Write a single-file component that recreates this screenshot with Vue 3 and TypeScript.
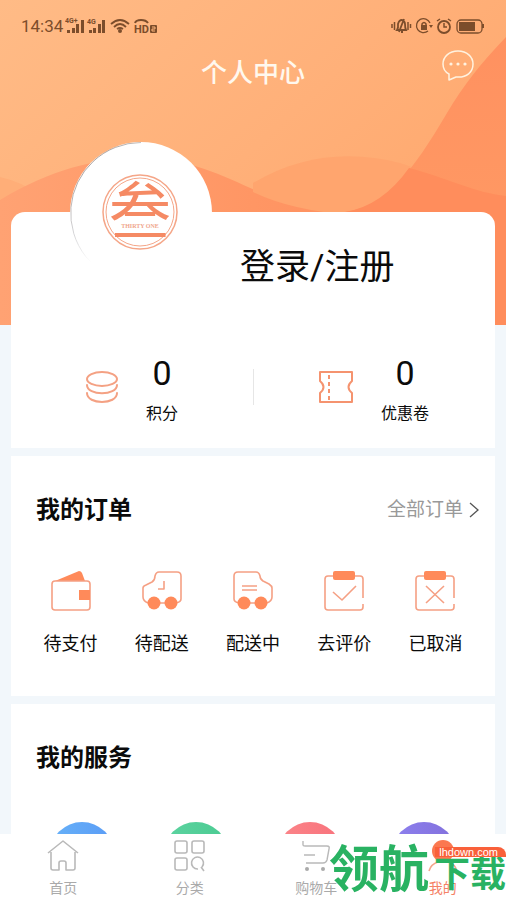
<script setup lang="ts">
interface OrderEntry {
  id: string
  label: string
}

interface ServiceEntry {
  id: string
  tone: string
}

interface TabEntry {
  id: string
  label: string
  active: boolean
}

const orders: OrderEntry[] = [
  { id: 'pay', label: '待支付' },
  { id: 'ship', label: '待配送' },
  { id: 'transit', label: '配送中' },
  { id: 'review', label: '去评价' },
  { id: 'cancel', label: '已取消' },
]

const services: ServiceEntry[] = [
  { id: 's1', tone: 'blue' },
  { id: 's2', tone: 'green' },
  { id: 's3', tone: 'red' },
  { id: 's4', tone: 'violet' },
]

const tabs: TabEntry[] = [
  { id: 'home', label: '首页', active: false },
  { id: 'category', label: '分类', active: false },
  { id: 'cart', label: '购物车', active: false },
  { id: 'mine', label: '我的', active: true },
]
</script>

<template>
  <div class="app">
    <main class="scroll">
      <svg class="waves" viewBox="0 0 506 325" preserveAspectRatio="none" aria-hidden="true">
        <defs>
          <linearGradient id="sky" x1="0" y1="0" x2="1" y2="0.7">
            <stop offset="0" stop-color="#ffbb86" />
            <stop offset="0.55" stop-color="#ffb079" />
            <stop offset="1" stop-color="#ffa76c" />
          </linearGradient>
          <linearGradient id="low" x1="0" y1="0" x2="1" y2="0">
            <stop offset="0" stop-color="#ffa273" />
            <stop offset="0.5" stop-color="#ff9664" />
            <stop offset="1" stop-color="#ff8a5a" />
          </linearGradient>
          <linearGradient id="side" x1="0" y1="0" x2="0" y2="1">
            <stop offset="0" stop-color="#ff9160" />
            <stop offset="1" stop-color="#ff9863" />
          </linearGradient>
        </defs>
        <rect width="506" height="325" fill="url(#sky)" />
        <path d="M0 177Q22 182 40 195V325H0Z" fill="#ffae78" />
        <path d="M0 200C50 170 95 158 140 158C205 158 245 190 290 204Q320 212 350 212L506 212V325H0Z" fill="url(#low)" />
        <path d="M253 183C300 155 350 150 400 163L450 180L400 215H350Q290 210 253 192Z" fill="#ffa56e" />
        <path d="M506 37C480 64 463 86 447 113C430 142 415 165 395 187C382 200 368 208 345 212H506Z" fill="url(#side)" />
        <path d="M409 168C445 177 475 193 506 196V325H300V212H345Q382 206 409 168Z" fill="#ff8d5c" />
      </svg>

      <div class="page">
        <header class="top">
          <div class="status">
            <span class="clock">14:34</span>
            <svg class="signals" width="96" height="18" viewBox="0 0 96 18" aria-hidden="true">
              <g fill="currentColor">
                <text x="0" y="6" font-size="7" font-weight="700">4G+</text>
                <rect x="2" y="13" width="3" height="3" /><rect x="7" y="11" width="3" height="5" /><rect x="11" y="7" width="3" height="9" /><rect x="16" y="3" width="3" height="13" />
                <text x="22" y="7" font-size="7" font-weight="700">4G</text>
                <rect x="24" y="13" width="3" height="3" /><rect x="28" y="11" width="3" height="5" /><rect x="33" y="7" width="3" height="9" /><rect x="37" y="3" width="3" height="13" />
                <circle cx="55" cy="14" r="2" />
                <text x="69" y="16" font-size="11" font-weight="700">HD</text>
                <rect x="85" y="8" width="7" height="8" rx="1" />
              </g>
              <g fill="none" stroke="currentColor" stroke-width="2">
                <path d="M46 7Q55 -1 64 7M49 10Q55 4 61 10M52 12Q55 10 58 12" stroke-width="1.8" />
                <path d="M70 6Q71 3 76 3Q81 3 83 6" />
                <path d="M87 10H90V12H87V14H90" stroke="#ffb67d" stroke-width="1" />
              </g>
            </svg>
            <svg class="device" width="94" height="18" viewBox="0 0 94 18" aria-hidden="true">
              <g fill="none" stroke="currentColor" stroke-width="1.5">
                <path d="M1 7V11M3.500 5V13M17 5V13M19.500 7V11" />
                <path d="M6 13Q7.500 11 7 7Q8 3 11 3Q14 4 14 7Q14 11 15 13ZM8 15L13 2M10 15H12" stroke-width="1.800" />
                <path d="M39 6A7 7 0 1 0 37 14" stroke-width="1.300" />
                <path d="M31 9V7Q33 4 35 7V9" />
                <circle cx="53" cy="10" r="6" stroke-width="1.800" />
                <path d="M53 6V10H56M46 4L49 2M60 4L57 2" />
                <rect x="66" y="3" width="25" height="13" rx="4" stroke-width="1.300" />
              </g>
              <g fill="currentColor">
                <rect x="30" y="8" width="6" height="5" />
                <path d="M38 8H42L40 11Z" />
                <rect x="68" y="5" width="16" height="9" />
                <rect x="91" y="7" width="2" height="4" />
              </g>
            </svg>
          </div>
          <div class="titlebar">
            <h1>个人中心</h1>
            <button class="chat" type="button" aria-label="消息">
              <svg width="34" height="32" viewBox="0 0 34 32">
                <path d="M17 1C8 1 2 7 2 14C2 18 4 22 8 24L8 30L15 27C26 28 32 22 32 14C32 7 26 1 17 1Z" fill="none" stroke="#fff2df" stroke-width="1.500" stroke-linejoin="round" />
                <g fill="#fff2df"><circle cx="10" cy="14" r="1.600" /><circle cx="17" cy="14" r="1.600" /><circle cx="24" cy="14" r="1.600" /></g>
              </svg>
            </button>
          </div>
        </header>

        <section class="card profile">
          <div class="identity">
            <svg class="avatar" viewBox="0 0 142 142" role="img" aria-label="头像">
              <defs>
                <linearGradient id="rim" x1="0.1" y1="0.1" x2="0.5" y2="0.9">
                  <stop offset="0" stop-color="#5c4a42" />
                  <stop offset="0.5" stop-color="#b4b4b8" />
                  <stop offset="0.85" stop-color="#ffffff" />
                </linearGradient>
              </defs>
              <circle cx="71" cy="71" r="71" fill="#fff" />
              <path d="M71 0.500A70.500 70.500 0 0 0 60 140.600" fill="none" stroke="url(#rim)" stroke-width="0.600" />
              <circle cx="70" cy="70" r="37" fill="none" stroke="#f5a688" stroke-width="1.500" />
              <circle cx="70" cy="70" r="34" fill="none" stroke="#f5a688" stroke-width="1" />
              <text class="mark" x="70" y="92" text-anchor="middle">叁</text>
              <rect x="48" y="79" width="44" height="9" fill="#fff" />
              <text class="motto" x="70" y="86" text-anchor="middle">THIRTY ONE</text>
            </svg>
            <a class="login" href="#login">登录/注册</a>
          </div>
          <div class="stats">
            <a class="stat" href="#points">
              <svg width="32" height="32" viewBox="0 0 32 32" fill="none" stroke="#f4a183" stroke-width="2" aria-hidden="true">
                <ellipse cx="16" cy="8" rx="15" ry="7" />
                <path d="M1 14C1 25 31 25 31 14M1 22C1 34 31 34 31 22" stroke-linecap="round" />
              </svg>
              <span class="figure"><b>0</b><span>积分</span></span>
            </a>
            <a class="stat" href="#coupons">
              <svg width="34" height="32" viewBox="0 0 34 32" fill="none" stroke="#f5936f" stroke-width="2" stroke-linejoin="round" aria-hidden="true">
                <path d="M1 1H33V10Q26 16 33 22V31H1V22Q8 16 1 10Z" />
                <path d="M10 4V30" stroke-dasharray="4 3" />
              </svg>
              <span class="figure"><b>0</b><span>优惠卷</span></span>
            </a>
          </div>
        </section>

        <section class="card">
          <div class="heading">
            <h2>我的订单</h2>
            <a class="more" href="#orders">全部订单
              <svg width="10" height="18" viewBox="0 0 10 18" aria-hidden="true"><path d="M1 2L9 9L1 16" fill="none" stroke="#555" stroke-width="1.300" /></svg>
            </a>
          </div>
          <nav class="orders" aria-label="我的订单">
            <a v-for="item in orders" :key="item.id" class="order" :href="'#' + item.id">
              <svg width="40" height="40" viewBox="0 0 40 40" fill="none" stroke="#f5a084" stroke-width="1.600" stroke-linejoin="round" aria-hidden="true">
                <template v-if="item.id === 'pay'">
                  <path d="M4 10L28 0Q30 0 31 2L34 10Z" fill="#ff8a5a" stroke="none" />
                  <rect x="1" y="10" width="38" height="29" rx="3" />
                  <rect x="28" y="19" width="11" height="10" fill="#ff8a5a" stroke="none" />
                </template>
                <template v-else-if="item.id === 'ship'">
                  <path d="M6 32Q1 30 1 26V17Q1 15 4 14L10 11Q13 9 13 5Q14 1 17 1H35Q39 1 39 5V28Q39 31 34 32M18 32H24" />
                  <path d="M22 10V18H16" />
                  <g fill="#ff8a5a" stroke="none"><circle cx="12" cy="32" r="6.500" /><circle cx="29" cy="32" r="6.500" /></g>
                </template>
                <template v-else-if="item.id === 'transit'">
                  <path d="M6 32Q1 31 1 28V5Q1 1 5 1H23Q26 1 27 5Q27 8 30 10L36 13Q39 15 39 17V26Q39 30 34 32M17 32H23" />
                  <path d="M9 15H24M9 19H24" />
                  <g fill="#ff8a5a" stroke="none"><circle cx="11" cy="32" r="6.500" /><circle cx="28" cy="32" r="6.500" /></g>
                </template>
                <template v-else>
                  <path d="M9 5H4Q1 5 1 8V36Q1 39 4 39H36Q39 39 39 36V33M39 27V8Q39 5 36 5H31" />
                  <rect x="9" y="0" width="22" height="9" rx="2" fill="#ff8a5a" stroke="none" />
                  <path v-if="item.id === 'review'" d="M9 21L18 29L32 15" />
                  <path v-else d="M11 15L29 32M29 15L11 32" />
                </template>
              </svg>
              <span>{{ item.label }}</span>
            </a>
          </nav>
        </section>

        <section class="card">
          <div class="heading"><h2>我的服务</h2></div>
          <div class="services">
            <span v-for="item in services" :key="item.id" class="disc" :class="item.tone"></span>
          </div>
        </section>
      </div>
    </main>

    <footer class="bottom">
      <nav class="tabs" aria-label="主导航">
        <a v-for="tab in tabs" :key="tab.id" class="tab" :class="{ active: tab.active }" :href="'#' + tab.id">
          <svg width="34" height="34" viewBox="0 0 34 34" fill="none" stroke="#b9b9b9" stroke-width="1.600" stroke-linejoin="round" aria-hidden="true">
            <path v-if="tab.id === 'home'" d="M2 14L17 2L32 14M5 13V29Q5 31 7 31H13V24Q13 22 15 22H18Q20 22 20 24V31H27Q29 31 29 29V13" />
            <template v-else-if="tab.id === 'category'">
              <rect x="2" y="2" width="12" height="12" rx="2" /><rect x="19" y="2" width="12" height="12" rx="2" /><rect x="2" y="19" width="12" height="12" rx="2" />
              <path d="M25 30A6 6 0 1 1 29 28M28 28L31 32" />
            </template>
            <template v-else-if="tab.id === 'cart'">
              <path d="M4 2V6Q4 7 6 7H28Q31 7 30 10L28 21Q27 24 24 24H7M5 16H16" stroke-width="1.400" />
              <g fill="#aaa" stroke="none"><circle cx="8" cy="30" r="2" /><circle cx="24" cy="30" r="2" /></g>
            </template>
            <template v-else>
              <circle cx="17" cy="12" r="11" fill="#fb7850" stroke="none" />
              <path d="M3 32Q5 25 12 23M31 32Q29 25 22 23" stroke="#f5a58c" />
            </template>
          </svg>
          <span>{{ tab.label }}</span>
        </a>
      </nav>
      <div class="stamp">
        <span class="site">lhdown.com</span>
        <span class="brand"><span class="large">领航</span><span class="small">下载</span></span>
      </div>
    </footer>
  </div>
</template>

<style>
body {
  background: #f2f7fb;
}
</style>

<style scoped>
.app {
  display: flex;
  flex-direction: column;
  height: 100vh;
  overflow: hidden;
  background: #f2f7fb;
  color: #0b0b0b;
  font-family: Roboto, "Noto Sans CJK SC", sans-serif;
}

a {
  color: inherit;
  text-decoration: none;
}

svg {
  display: block;
  flex: none;
}

h1,
h2 {
  margin: 0;
}

.scroll {
  position: relative;
  flex: 1;
  min-height: 0;
  overflow: hidden;
}

.waves {
  position: absolute;
  top: 0;
  left: 0;
  width: 100%;
  height: 325px;
}

.page {
  position: relative;
  display: flex;
  flex-direction: column;
  gap: 8px;
  padding: 0 11px;
}

.top {
  height: 204px;
}

.status {
  display: flex;
  align-items: center;
  padding: 16px 10px 0;
  color: #7c4d2b;
}

.clock {
  font-size: 17px;
  line-height: 20px;
}

.signals {
  margin-left: 2px;
}

.device {
  margin-left: auto;
}

.titlebar {
  display: grid;
  grid-template-columns: 1fr auto 1fr;
  align-items: center;
  margin-top: 14px;
  padding: 0 20px;
}

.titlebar h1 {
  grid-column: 2;
  color: #fff8ee;
  font-size: 26px;
  font-weight: 500;
  line-height: 46px;
}

.chat {
  justify-self: end;
  align-self: start;
  padding: 0;
  border: 0;
  background: none;
}

.card {
  padding: 38px 14px 40px;
  background: #fff;
}

.profile {
  padding: 0 0 25px;
  border-radius: 14px 14px 0 0;
}

.identity {
  display: flex;
  align-items: flex-end;
  padding-left: 59px;
}

.avatar {
  width: 142px;
  height: 142px;
  margin-top: -70px;
}

.mark {
  fill: #f58a64;
  font-size: 62px;
}

.motto {
  fill: #f0a58c;
  font-family: "Liberation Serif", serif;
  font-size: 6px;
  font-weight: 700;
}

.login {
  margin-left: 28px;
  font-size: 35px;
  line-height: 32px;
}

.stats {
  display: grid;
  grid-template-columns: 1fr 1fr;
  margin-top: 66px;
  background: linear-gradient(#e6e6e6, #e6e6e6) center / 1px 36px no-repeat;
}

.stat {
  display: flex;
  align-items: center;
  justify-content: center;
  gap: 28px;
}

.figure {
  display: flex;
  flex-direction: column;
  align-items: center;
  gap: 9px;
  font-size: 16px;
  line-height: 18px;
}

.figure b {
  font-size: 34px;
  font-weight: 400;
  line-height: 46px;
}

.heading {
  display: flex;
  align-items: center;
  justify-content: space-between;
  padding: 0 2px 0 11px;
  line-height: 32px;
}

.heading h2 {
  font-size: 24px;
  font-weight: 700;
}

.more {
  display: flex;
  align-items: center;
  gap: 6px;
  color: #999;
  font-size: 19px;
}

.orders {
  display: grid;
  grid-template-columns: repeat(5, 1fr);
  margin-top: 45px;
}

.order {
  display: flex;
  flex-direction: column;
  align-items: center;
  gap: 21px;
  font-size: 18px;
  line-height: 24px;
}

.services {
  display: grid;
  grid-template-columns: repeat(4, 1fr);
  justify-items: center;
  margin-top: 48px;
}

.disc {
  width: 64px;
  height: 64px;
  border-radius: 50%;
}

.blue {
  background: linear-gradient(90deg, #67b1f8, #5a9cf6);
}

.green {
  background: linear-gradient(90deg, #5cd3a0, #4bcb92);
}

.red {
  background: linear-gradient(90deg, #fb8589, #f8727c);
}

.violet {
  background: linear-gradient(90deg, #8d80ee, #8270dc);
}

.bottom {
  position: relative;
  flex: none;
  overflow: hidden;
  background: #fff;
}

.tabs {
  display: grid;
  grid-template-columns: repeat(4, 1fr);
  padding: 5px 0 2px;
}

.tab {
  display: flex;
  flex-direction: column;
  align-items: center;
  gap: 5px;
  color: #aaa;
  font-size: 14px;
  line-height: 20px;
}

.tab.active {
  color: #f58266;
}

.stamp {
  position: absolute;
  top: 13px;
  right: 0;
  display: flex;
  flex-direction: column;
  align-items: flex-end;
  white-space: nowrap;
  pointer-events: none;
}

.site {
  z-index: 1;
  padding: 0 8px 0 4px;
  border-radius: 0 8px 0 0;
  background: #f9603a;
  color: #fff;
  font-family: "Liberation Sans", sans-serif;
  font-size: 11px;
  line-height: 10px;
}

.brand {
  display: flex;
  align-items: baseline;
  gap: 5px;
  margin-top: -5px;
  color: #29b262;
  font-weight: 700;
  line-height: 36px;
}

.large {
  font-size: 50px;
}

.small {
  font-size: 36px;
}
</style>
